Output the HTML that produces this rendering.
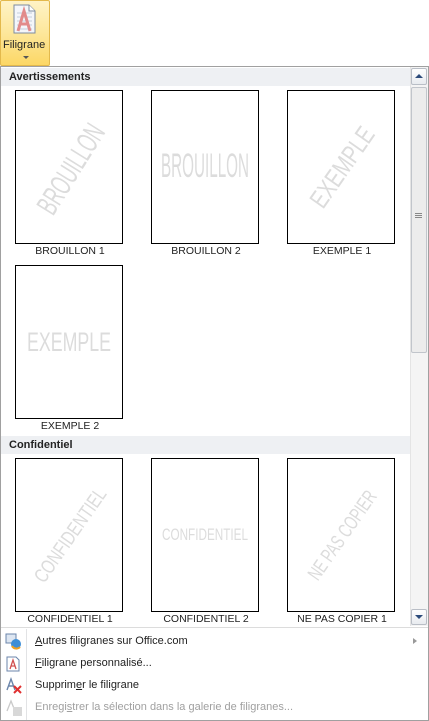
<!DOCTYPE html>
<html><head><meta charset="utf-8"><style>
*{margin:0;padding:0;box-sizing:border-box}
body{width:429px;height:721px;background:#fff;position:relative;overflow:hidden;font-family:"Liberation Sans",sans-serif;font-size:11px;color:#1e395b}
.a{position:absolute}
.btn{left:0;top:0;width:50px;height:66px;border:1px solid #e3b94c;border-radius:2px;background:linear-gradient(#fff3c6,#fde79b 50%,#fcd765);}
.drop{left:0;top:66px;width:429px;height:655px;border:1px solid #a0a0a0;background:#fff}
.hdr{left:1px;width:409px;height:18px;background:#eef0f3;font-weight:bold;color:#222;font-size:11px;padding:3px 0 0 8px}
.th{width:108px;height:154px;border:1px solid #000;background:#fff}
.lab{width:140px;text-align:center;color:#222;font-size:10.5px}
.mi{left:35px;color:#222;font-size:11px}
svg text{font-family:"Liberation Sans",sans-serif;fill:#dcdcdc}
</style></head><body>
<div class="a btn">
<svg class="a" style="left:11px;top:3px" width="26" height="30" viewBox="0 0 26 30"><path d="M2 1h15l6 6v22H2z" fill="#f4f6fa" stroke="#7e8ca0"/><path d="M17 1v6h6" fill="#fff" stroke="#7e8ca0"/><g stroke="#c5cedc"><line x1="5" y1="9" x2="20" y2="9"/><line x1="5" y1="13" x2="20" y2="13"/><line x1="5" y1="17" x2="20" y2="17"/><line x1="5" y1="21" x2="20" y2="21"/><line x1="5" y1="25" x2="20" y2="25"/></g><path d="M6 27l6-20 6 20M8.5 20h7" stroke="#e28b8b" stroke-width="3" fill="none"/></svg>
<div class="a" style="left:2px;top:38px;font-size:11px;color:#222">Filigrane</div>
<div class="a" style="left:22px;top:55px;width:0;height:0;border-left:3px solid transparent;border-right:3px solid transparent;border-top:3px solid #555"></div>
</div>
<div class="a drop"></div>
<div class="a hdr" style="top:68px">Avertissements</div>
<div class="a hdr" style="top:436px">Confidentiel</div>

<!-- row1 -->
<div class="a th" style="left:15px;top:90px"><svg width="106" height="152"><text x="0" y="0" font-size="30" textLength="100" lengthAdjust="spacingAndGlyphs" text-anchor="middle" transform="translate(55,78) rotate(-58)" dy="10">BROUILLON</text></svg></div>
<div class="a th" style="left:151px;top:90px"><svg width="106" height="152"><text x="53" y="86" font-size="34" textLength="88" lengthAdjust="spacingAndGlyphs" text-anchor="middle">BROUILLON</text></svg></div>
<div class="a th" style="left:287px;top:90px"><svg width="106" height="152"><text x="0" y="0" font-size="26" textLength="92" lengthAdjust="spacingAndGlyphs" text-anchor="middle" transform="translate(54,76) rotate(-55)" dy="9">EXEMPLE</text></svg></div>
<div class="a lab" style="left:0;top:245px">BROUILLON 1</div>
<div class="a lab" style="left:136px;top:245px">BROUILLON 2</div>
<div class="a lab" style="left:272px;top:245px">EXEMPLE 1</div>
<!-- row2 -->
<div class="a th" style="left:15px;top:265px"><svg width="106" height="152"><text x="53" y="85" font-size="27" textLength="84" lengthAdjust="spacingAndGlyphs" text-anchor="middle">EXEMPLE</text></svg></div>
<div class="a lab" style="left:0;top:420px">EXEMPLE 2</div>
<!-- row3 -->
<div class="a th" style="left:15px;top:458px"><svg width="106" height="152"><text x="0" y="0" font-size="20" textLength="110" lengthAdjust="spacingAndGlyphs" text-anchor="middle" transform="translate(54,76) rotate(-55)" dy="7">CONFIDENTIEL</text></svg></div>
<div class="a th" style="left:151px;top:458px"><svg width="106" height="152"><text x="53" y="81" font-size="17" textLength="86" lengthAdjust="spacingAndGlyphs" text-anchor="middle">CONFIDENTIEL</text></svg></div>
<div class="a th" style="left:287px;top:458px"><svg width="106" height="152"><text x="0" y="0" font-size="20" textLength="104" lengthAdjust="spacingAndGlyphs" text-anchor="middle" transform="translate(54,76) rotate(-55)" dy="7">NE PAS COPIER</text></svg></div>
<div class="a lab" style="left:0;top:613px">CONFIDENTIEL 1</div>
<div class="a lab" style="left:136px;top:613px">CONFIDENTIEL 2</div>
<div class="a lab" style="left:272px;top:613px">NE PAS COPIER 1</div>

<!-- scrollbar -->
<div class="a" style="left:410px;top:67px;width:18px;height:559px;background:#f4f4f4;border-left:1px solid #e4e4e4"></div>
<div class="a" style="left:411px;top:68px;width:16px;height:17px;border:1px solid #b9bec6;border-radius:2px;background:linear-gradient(#fff,#e8ebef)"></div>
<div class="a" style="left:415px;top:74px;border-left:4px solid transparent;border-right:4px solid transparent;border-bottom:4px solid #2c4b7a"></div>
<div class="a" style="left:411px;top:87px;width:16px;height:266px;border:1px solid #c1c5cb;border-radius:2px;background:#ececec"></div>
<div class="a" style="left:415px;top:213px;width:7px;height:5px;border-top:1px solid #888;border-bottom:1px solid #888"></div>
<div class="a" style="left:415px;top:215px;width:7px;height:1px;background:#888"></div>
<div class="a" style="left:411px;top:609px;width:16px;height:16px;border:1px solid #b9bec6;border-radius:2px;background:linear-gradient(#fff,#e8ebef)"></div>
<div class="a" style="left:415px;top:615px;border-left:4px solid transparent;border-right:4px solid transparent;border-top:4px solid #2c4b7a"></div>

<!-- menu -->
<div class="a" style="left:1px;top:627px;width:427px;height:1px;background:#dcdcdc"></div>
<div class="a" style="left:26px;top:629px;width:1px;height:91px;background:#e2e3e5"></div>
<svg class="a" style="left:5px;top:633px" width="18" height="18"><rect x="1" y="1" width="10" height="9" fill="#dde6f2" stroke="#6b85ab"/><circle cx="11" cy="11" r="5" fill="#3e8ed6"/><path d="M7 13a5 5 0 0 0 8 1" stroke="#f0a020" stroke-width="2" fill="none"/></svg>
<div class="a mi" style="top:635px"><u>A</u>utres filigranes sur Office.com</div>
<div class="a" style="left:413px;top:638px;border-top:3.5px solid transparent;border-bottom:3.5px solid transparent;border-left:4px solid #999"></div>
<svg class="a" style="left:6px;top:656px" width="14" height="16"><path d="M1 1h9l3 3v11H1z" fill="#fff" stroke="#6b85ab"/><path d="M4 13l3-9 3 9M5 10h4" stroke="#d05050" stroke-width="1.3" fill="none"/></svg>
<div class="a mi" style="top:657px"><u>F</u>iligrane personnalisé...</div>
<svg class="a" style="left:5px;top:677px" width="18" height="18"><path d="M2 13l4-11 4 11M3.5 9h5" stroke="#6b85ab" stroke-width="1.4" fill="none"/><path d="M9 9l7 7M16 9l-7 7" stroke="#e03030" stroke-width="2"/></svg>
<div class="a mi" style="top:679px">Supprim<u>e</u>r le filigrane</div>
<svg class="a" style="left:5px;top:699px" width="18" height="18" opacity=".45"><path d="M2 12l4-10 4 10" stroke="#888" stroke-width="1.3" fill="none"/><rect x="8" y="8" width="9" height="9" fill="#aaa"/></svg>
<div class="a mi" style="top:701px;color:#a0a0a0">Enregi<u>s</u>trer la sélection dans la galerie de filigranes...</div>
</body></html>
